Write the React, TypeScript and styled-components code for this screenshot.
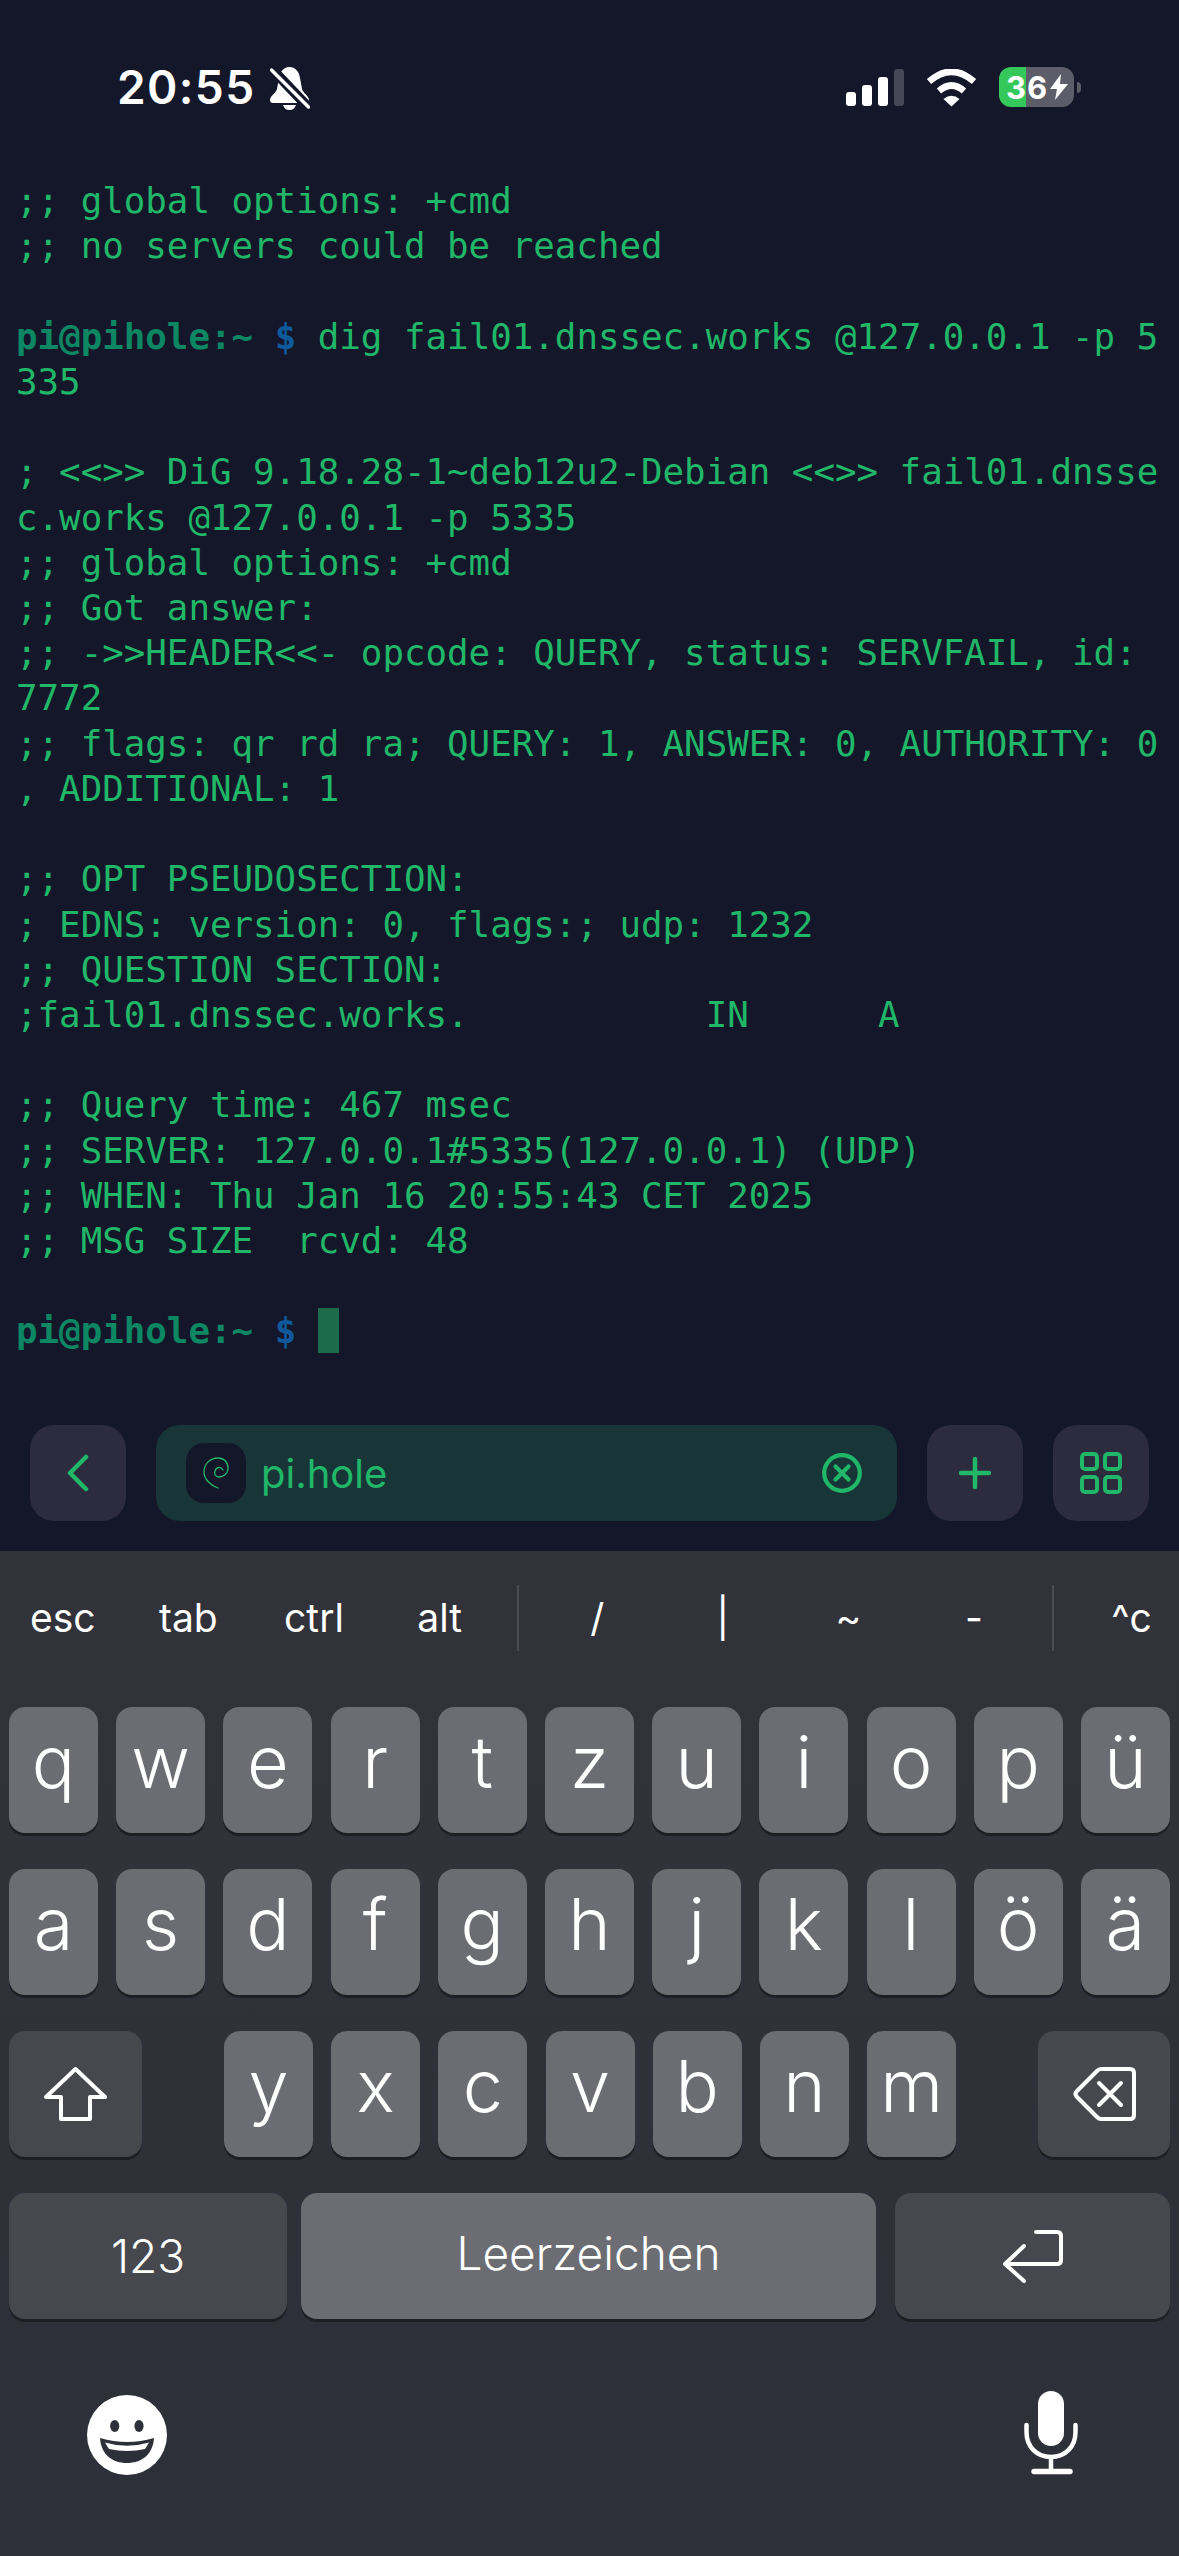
import React from 'react';
import styled, { createGlobalStyle } from 'styled-components';

const GlobalStyle = createGlobalStyle`
  html, body {
    margin: 0;
    padding: 0;
    background: #14172a;
  }
  * {
    box-sizing: border-box;
  }
`;

const ACCENT = '#20b768';

type Line = string | { prompt: true; rest: string };

const terminalLines: Line[] = [
  ';; global options: +cmd',
  ';; no servers could be reached',
  '',
  { prompt: true, rest: 'dig fail01.dnssec.works @127.0.0.1 -p 5' },
  '335',
  '',
  '; <<>> DiG 9.18.28-1~deb12u2-Debian <<>> fail01.dnsse',
  'c.works @127.0.0.1 -p 5335',
  ';; global options: +cmd',
  ';; Got answer:',
  ';; ->>HEADER<<- opcode: QUERY, status: SERVFAIL, id:',
  '7772',
  ';; flags: qr rd ra; QUERY: 1, ANSWER: 0, AUTHORITY: 0',
  ', ADDITIONAL: 1',
  '',
  ';; OPT PSEUDOSECTION:',
  '; EDNS: version: 0, flags:; udp: 1232',
  ';; QUESTION SECTION:',
  ';fail01.dnssec.works.           IN      A',
  '',
  ';; Query time: 467 msec',
  ';; SERVER: 127.0.0.1#5335(127.0.0.1) (UDP)',
  ';; WHEN: Thu Jan 16 20:55:43 CET 2025',
  ';; MSG SIZE  rcvd: 48',
  '',
];

const Screen = styled.div`
  width: 1179px;
  height: 2556px;
  display: flex;
  flex-direction: column;
  overflow: hidden;
  background: #14172a;
  font-family: Inter, 'Liberation Sans', sans-serif;
`;

const StatusBar = styled.div`
  height: 178px;
  flex: none;
  display: flex;
  justify-content: space-between;
  align-items: flex-start;
  padding: 67px 105px 0 117px;
  color: #fff;
`;

const TimeGroup = styled.div`
  display: flex;
  align-items: flex-start;
  gap: 14px;
`;

const Time = styled.span`
  font-size: 46px;
  font-weight: 600;
  line-height: 40px;
  letter-spacing: 1.4px;
`;

const StatusIcons = styled.div`
  display: flex;
  align-items: flex-start;
  gap: 22px;
`;

const SignalIcon = styled.svg`
  margin-top: 2px;
`;

const Battery = styled.div`
  position: relative;
  width: 75px;
  height: 40px;
  border-radius: 12px;
  display: flex;
  align-items: center;
  gap: 2px;
  padding-left: 7px;
  background: linear-gradient(90deg, #34c759 0, #34c759 27px, #5c5d69 27px);
  font-size: 31px;
  font-weight: 700;
  color: #fff;
  letter-spacing: 1px;

  &::after {
    content: '';
    position: absolute;
    left: 78px;
    top: 15px;
    width: 4px;
    height: 11px;
    border-radius: 0 4px 4px 0;
    background: #5c5d69;
  }
`;

const Terminal = styled.div`
  flex: 1;
  padding-left: 16px;
  font-family: 'DejaVu Sans Mono', 'Liberation Mono', monospace;
  font-size: 35.8px;
  color: ${ACCENT};
`;

const TermLine = styled.div`
  height: 45.22px;
  line-height: 45.22px;
  white-space: pre;
`;

const PromptHost = styled.span`
  font-weight: 700;
  color: #0b8763;
`;

const PromptSign = styled.span`
  font-weight: 700;
  color: #0e5a9c;
`;

const Cursor = styled.span`
  display: inline-block;
  width: 21px;
  height: 45px;
  vertical-align: top;
  background: #1c6b4b;
`;

const Toolbar = styled.div`
  flex: none;
  display: flex;
  gap: 30px;
  padding: 0 30px 30px;
`;

const ToolButton = styled.div`
  width: 96px;
  height: 96px;
  flex: none;
  border-radius: 24px;
  background: #2c2c3e;
  display: flex;
  align-items: center;
  justify-content: center;
`;

const Tab = styled.div`
  flex: 1;
  height: 96px;
  border-radius: 24px;
  background: #183638;
  display: flex;
  align-items: center;
  padding: 0 35px 0 30px;
  gap: 15px;
`;

const Favicon = styled.div`
  width: 60px;
  height: 60px;
  flex: none;
  border-radius: 18px;
  background: #14172a;
  display: flex;
  align-items: center;
  justify-content: center;
`;

const TabTitle = styled.span`
  flex: 1;
  font-size: 40px;
  font-weight: 400;
  color: ${ACCENT};
`;

const Keyboard = styled.div`
  height: 1005px;
  flex: none;
  display: flex;
  flex-direction: column;
  background: linear-gradient(180deg, #32323a 0%, #2d3039 100%);
`;

const Accessory = styled.div`
  height: 134px;
  flex: none;
  display: flex;
  align-items: center;
  overflow: hidden;
`;

const AccessoryKey = styled.div`
  width: 125.6px;
  flex: none;
  padding-bottom: 2px;
  text-align: center;
  font-size: 39px;
  font-weight: 400;
  color: #fff;
`;

const AccessoryDivider = styled.div`
  width: 32px;
  flex: none;
  display: flex;
  justify-content: center;

  &::before {
    content: '';
    width: 2px;
    height: 66px;
    background: #4a4b54;
  }
`;

const KeyRows = styled.div`
  display: flex;
  flex-direction: column;
  gap: 36px;
  padding: 22px 9px 0;
`;

const KeyRow = styled.div`
  display: flex;
  justify-content: space-between;
`;

const LetterGroup = styled.div`
  display: flex;
  gap: 18.2px;
`;

const Key = styled.div<{ $width: number; $dark?: boolean; $size?: number; $lift?: number }>`
  width: ${(p) => p.$width}px;
  height: 126px;
  flex: none;
  border-radius: 16px;
  background: ${(p) => (p.$dark ? '#47484e' : '#6c6d72')};
  box-shadow: 0 3px 0 #1e1f25;
  display: flex;
  align-items: center;
  justify-content: center;
  padding-bottom: ${(p) => p.$lift ?? 0}px;
  font-size: ${(p) => p.$size ?? 72}px;
  font-weight: 300;
  color: #fff;
`;

const SpaceKey = styled(Key)`
  margin: 0 auto 0 14px;
`;

const BottomRow = styled.div`
  display: flex;
  justify-content: space-between;
  align-items: flex-end;
  padding: 72px 100px 0 87px;
`;

const BackIcon = () => (
  <svg width="22" height="38" viewBox="0 0 22 38" fill="none" stroke={ACCENT} strokeWidth="4.5" strokeLinecap="round" strokeLinejoin="round">
    <path d="M19 3 L3 19 L19 35" />
  </svg>
);

const PlusIcon = () => (
  <svg width="34" height="34" viewBox="0 0 34 34" fill="none" stroke={ACCENT} strokeWidth="4.5" strokeLinecap="round">
    <path d="M17 3 V31 M3 17 H31" />
  </svg>
);

const GridIcon = () => (
  <svg width="42" height="42" viewBox="0 0 42 42" fill="none" stroke={ACCENT} strokeWidth="4">
    <rect x="2" y="2" width="15" height="15" rx="3" />
    <rect x="25" y="2" width="15" height="15" rx="3" />
    <rect x="2" y="25" width="15" height="15" rx="3" />
    <rect x="25" y="25" width="15" height="15" rx="3" />
  </svg>
);

const CloseIcon = () => (
  <svg width="40" height="40" viewBox="0 0 40 40" fill="none" stroke={ACCENT} strokeWidth="4.2" strokeLinecap="round">
    <circle cx="20" cy="20" r="17.8" />
    <path d="M13.5 13.5 L26.5 26.5 M26.5 13.5 L13.5 26.5" />
  </svg>
);

const DebianIcon = () => (
  <svg width="26" height="32" viewBox="0 0 26 32" fill="none" stroke={ACCENT} strokeWidth="1.3" strokeLinecap="round">
    <path d="M15 31 C7 28 1 22 1 15 C1 6 8 1 15 1 C21 1 25 5 25 11 C25 17 20 20 16 20 C12 20 11 16 12 14 C13 10 18 9 20 13" />
  </svg>
);

const BellSlashIcon = () => (
  <svg width="40" height="43" viewBox="0 0 40 43" fill="#fff">
    <path d="M19.5 0 C25 0 29 4 30 11 L32 22 C33 26 39 29 39 33 C39 35 38 36 36 36 H3 C1 36 0 35 0 33 C0 29 6 26 7 22 L9 11 C10 4 14 0 19.5 0 Z" />
    <path d="M13 38 H26 C25 41 23 43 19.5 43 C16 43 14 41 13 38 Z" />
    <path d="M0 0 L40 42" stroke="#14172a" strokeWidth="10" />
    <path d="M1.5 3 L38.5 40" stroke="#fff" strokeWidth="3.5" strokeLinecap="round" />
  </svg>
);

const SignalBars = () => (
  <SignalIcon width="58" height="38" viewBox="0 0 58 38">
    <rect x="0" y="23" width="10" height="14" rx="3" fill="#fff" />
    <rect x="16" y="16" width="10" height="21" rx="3" fill="#fff" />
    <rect x="32" y="8" width="10" height="29" rx="3" fill="#fff" />
    <rect x="48" y="0" width="10" height="37" rx="3" fill="#454757" />
  </SignalIcon>
);

const WifiIcon = () => (
  <SignalIcon width="51" height="38" viewBox="0 0 51 38">
    <path d="M3 12.5 Q25.5 -7 48 12.5" fill="none" stroke="#fff" strokeWidth="6.5" />
    <path d="M13 22 Q25.5 11 38 22" fill="none" stroke="#fff" strokeWidth="6.5" />
    <path d="M17.5 30 Q25.5 23.5 33.5 30 L25.5 37.5 Z" fill="#fff" />
  </SignalIcon>
);

const BoltIcon = () => (
  <svg width="18" height="26" viewBox="0 0 18 26" fill="#fff">
    <path d="M11 0 L0 15 H7 L5 26 L18 10 H10 Z" />
  </svg>
);

const ShiftIcon = () => (
  <svg width="63" height="54" viewBox="0 0 63 54" fill="none" stroke="#fff" strokeWidth="4" strokeLinejoin="round">
    <path d="M31.5 2 L61 30 H46 V52 H17 V30 H2 Z" />
  </svg>
);

const DeleteIcon = () => (
  <svg width="63" height="54" viewBox="0 0 63 54" fill="none" stroke="#fff" strokeWidth="4" strokeLinejoin="round" strokeLinecap="round">
    <path d="M28 2 H57 Q61 2 61 6 V48 Q61 52 57 52 H28 Q26 52 24 50 L4 30 Q1 27 4 24 L24 4 Q26 2 28 2 Z" />
    <path d="M26 16 L48 38 M48 16 L26 38" />
  </svg>
);

const ReturnIcon = () => (
  <svg width="61" height="53" viewBox="0 0 61 53" fill="none" stroke="#fff" strokeWidth="4" strokeLinejoin="round" strokeLinecap="round">
    <path d="M34 2 H55 Q59 2 59 6 V30 Q59 34 55 34 H3 M22 16 L3 34 L22 51" />
  </svg>
);

const EmojiIcon = () => (
  <svg width="80" height="80" viewBox="0 0 80 80">
    <circle cx="40" cy="40" r="40" fill="#fff" />
    <ellipse cx="27.7" cy="31" rx="4.6" ry="6" fill="#2e3039" />
    <ellipse cx="52" cy="31" rx="4.6" ry="6" fill="#2e3039" />
    <path d="M13 43 Q40 51 67 43 C66 60 54 68 40 68 C26 68 14 60 13 43 Z" fill="#2e3039" />
    <path d="M18 47.5 Q40 54 62 47.5 Q60 51 58 54 Q40 58 22 54 Q20 51 18 47.5 Z" fill="#fff" />
  </svg>
);

const MicIcon = () => (
  <svg width="56" height="84" viewBox="0 0 56 84" fill="none">
    <rect x="15" y="0" width="26" height="55" rx="13" fill="#fff" />
    <path d="M3.5 34 V41 C3.5 56 14 66 28 66 C42 66 52.5 56 52.5 41 V34" stroke="#fff" strokeWidth="4.5" strokeLinecap="round" />
    <path d="M28 66 V80" stroke="#fff" strokeWidth="4.5" />
    <path d="M11 80.5 H47" stroke="#fff" strokeWidth="5.5" strokeLinecap="round" />
  </svg>
);

const row1 = ['q', 'w', 'e', 'r', 't', 'z', 'u', 'i', 'o', 'p', 'ü'];
const row2 = ['a', 's', 'd', 'f', 'g', 'h', 'j', 'k', 'l', 'ö', 'ä'];
const row3 = ['y', 'x', 'c', 'v', 'b', 'n', 'm'];

export default function App() {
  return (
    <Screen>
      <GlobalStyle />
      <StatusBar>
        <TimeGroup>
          <Time>20:55</Time>
          <BellSlashIcon />
        </TimeGroup>
        <StatusIcons>
          <SignalBars />
          <WifiIcon />
          <Battery>
            36
            <BoltIcon />
          </Battery>
        </StatusIcons>
      </StatusBar>

      <Terminal>
        {terminalLines.map((line, i) =>
          typeof line === 'string' ? (
            <TermLine key={i}>{line}</TermLine>
          ) : (
            <TermLine key={i}>
              <PromptHost>pi@pihole:~</PromptHost> <PromptSign>$</PromptSign> {line.rest}
            </TermLine>
          ),
        )}
        <TermLine>
          <PromptHost>pi@pihole:~</PromptHost> <PromptSign>$</PromptSign> <Cursor />
        </TermLine>
      </Terminal>

      <Toolbar>
        <ToolButton>
          <BackIcon />
        </ToolButton>
        <Tab>
          <Favicon>
            <DebianIcon />
          </Favicon>
          <TabTitle>pi.hole</TabTitle>
          <CloseIcon />
        </Tab>
        <ToolButton>
          <PlusIcon />
        </ToolButton>
        <ToolButton>
          <GridIcon />
        </ToolButton>
      </Toolbar>

      <Keyboard>
        <Accessory>
          {['esc', 'tab', 'ctrl', 'alt'].map((k) => (
            <AccessoryKey key={k}>{k}</AccessoryKey>
          ))}
          <AccessoryDivider />
          {['/', '|', '~', '-'].map((k) => (
            <AccessoryKey key={k}>{k}</AccessoryKey>
          ))}
          <AccessoryDivider />
          <AccessoryKey>^c</AccessoryKey>
        </Accessory>
        <KeyRows>
          <KeyRow>
            {row1.map((k) => (
              <Key key={k} $width={89} $lift={18}>
                {k}
              </Key>
            ))}
          </KeyRow>
          <KeyRow>
            {row2.map((k) => (
              <Key key={k} $width={89} $lift={18}>
                {k}
              </Key>
            ))}
          </KeyRow>
          <KeyRow>
            <Key $width={133} $dark>
              <ShiftIcon />
            </Key>
            <LetterGroup>
              {row3.map((k) => (
                <Key key={k} $width={89} $lift={18}>
                  {k}
                </Key>
              ))}
            </LetterGroup>
            <Key $width={132} $dark>
              <DeleteIcon />
            </Key>
          </KeyRow>
          <KeyRow>
            <Key $width={278} $dark $size={46}>
              123
            </Key>
            <SpaceKey $width={575} $size={46} $lift={6}>
              Leerzeichen
            </SpaceKey>
            <Key $width={275} $dark>
              <ReturnIcon />
            </Key>
          </KeyRow>
        </KeyRows>
        <BottomRow>
          <EmojiIcon />
          <MicIcon />
        </BottomRow>
      </Keyboard>
    </Screen>
  );
}
